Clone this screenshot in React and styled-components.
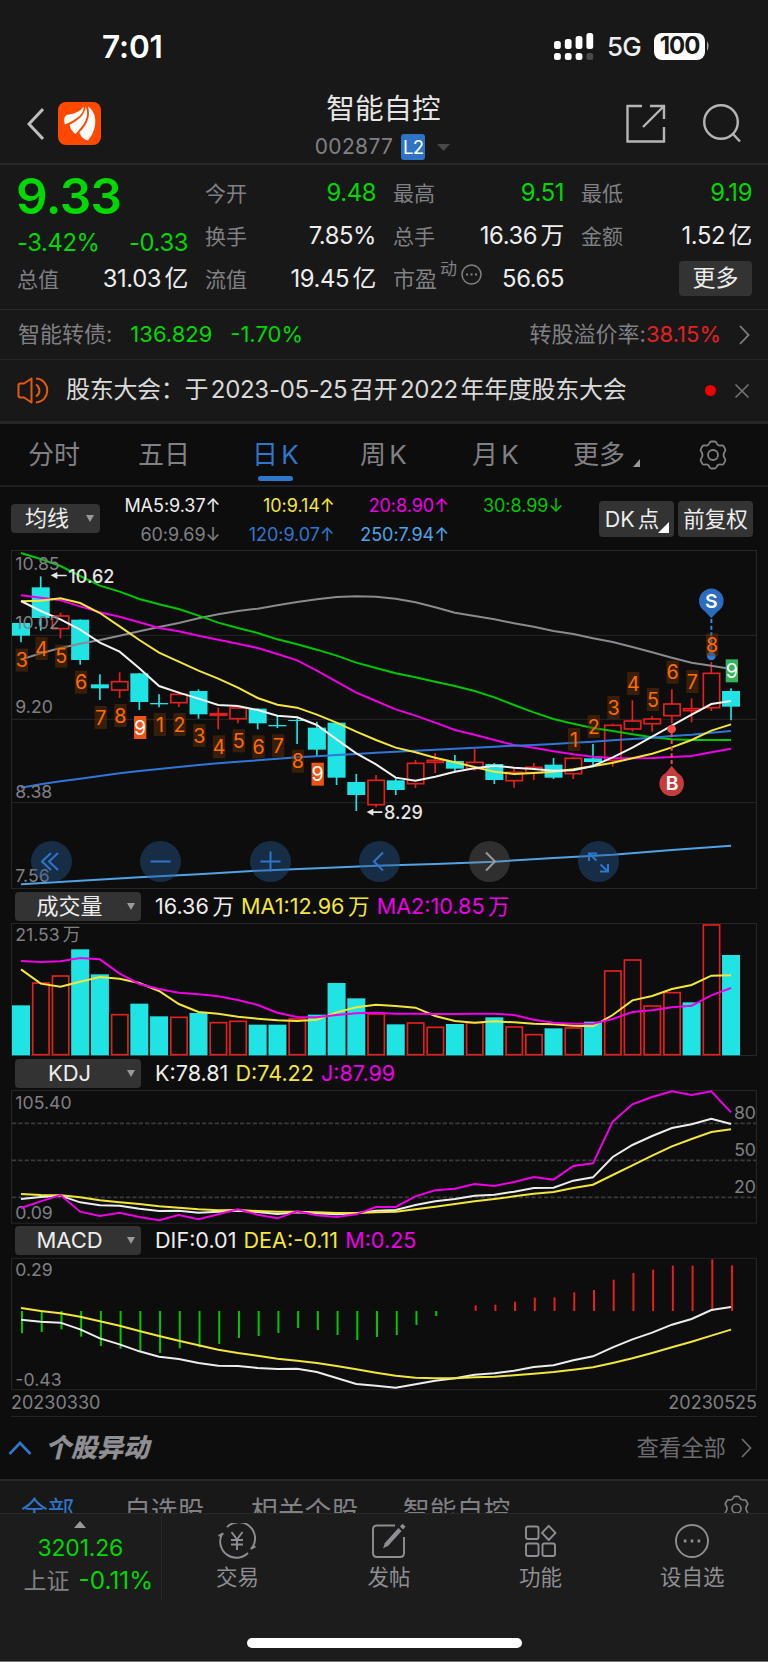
import styled, { createGlobalStyle, css } from "styled-components";

const GlobalStyle = createGlobalStyle`
  * {
    box-sizing: border-box;
  }

  body {
    margin: 0;
    background-color: #0d0d0d;
    font-family: Inter, "Noto Sans CJK SC", sans-serif;
    line-height: 1.2;
    color: #ededed;
  }
`;

const GREEN = "#00d800";
const CYAN = "#20e3e3";
const RED = "#e3201f";
const YELLOW = "#f2e63c";
const MAGENTA = "#ee00e6";
const BLUE = "#2f76cc";
const GRAY = "#808085";

const Screen = styled.div`
  width: 768px;
  height: 1662px;
  display: flex;
  flex-direction: column;
  overflow: hidden;
  white-space: nowrap;
  border-bottom: 1px solid #6e6e6e;
`;

const StatusBar = styled.div`
  height: 86px;
  padding: 6px 58px 0 102px;
  display: flex;
  align-items: center;
  background-color: #181818;
`;

const Clock = styled.div`
  font-weight: 600;
  font-size: 31.5px;
  letter-spacing: -0.1px;
  color: #fff;
  margin: 1px auto 0 0;
`;

const Network = styled.div`
  font-size: 26px;
  font-weight: 500;
  letter-spacing: -0.8px;
  width: 35px;
  margin: 2px 12px 0 13px;
`;

const Battery = styled.div`
  width: 51px;
  height: 27px;
  border-radius: 8px;
  background-color: #fff;
  color: #181818;
  font-weight: 700;
  font-size: 24px;
  letter-spacing: -1px;
  display: flex;
  align-items: center;
  justify-content: center;
`;

const NavBar = styled.div`
  height: 79px;
  padding: 0 27px;
  display: flex;
  background-color: #181818;
  border-bottom: 2px solid #272727;

  > svg {
    flex: none;
  }
`;

const LogoMark = styled.svg`
  width: 43px;
  height: 43px;
  margin: 16px 0 0 14px;
`;

const NavTitle = styled.div`
  flex: 1;
  display: flex;
  flex-direction: column;
  align-items: center;
  margin-left: 40px;
`;

const StockName = styled.div`
  font-size: 28.6px;
  line-height: 34px;
  margin-top: 6px;
  color: #e6e6e6;
`;

const StockCode = styled.div`
  display: flex;
  align-items: center;
  font-size: 21px;
  line-height: 26px;
  letter-spacing: 0.35px;
  margin: 8px 2px 0 0;
  color: ${GRAY};

  svg {
    margin-left: 12px;
  }
`;

const LevelBadge = styled.span`
  width: 24px;
  height: 26px;
  margin-left: 8px;
  border-radius: 3px;
  background-color: #2f73c6;
  color: #fff;
  font-size: 18.5px;
  letter-spacing: -0.5px;
  text-align: center;
`;

const Quote = styled.div`
  height: 145px;
  padding: 7px 16px 0 17px;
  display: grid;
  grid-template-columns: repeat(4, 171px);
  grid-auto-rows: 43px;
  column-gap: 17px;
  background-color: #181818;
  border-bottom: 1px solid #2a2a2a;
`;

const QuoteCell = styled.div`
  display: flex;
  justify-content: space-between;
  align-items: center;
  font-size: 23.8px;
  letter-spacing: -0.4px;
  word-spacing: -2.8px;
  padding-top: ${({ $drop }) => $drop || 0}px;
  color: ${({ $color }) => $color || "#ededed"};
`;

const Label = styled.span`
  font-size: 21px;
  letter-spacing: 0;
  color: ${GRAY};
`;

const Price = styled.div`
  font-weight: 600;
  font-size: 49.5px;
  line-height: 48px;
  letter-spacing: -0.6px;
  margin-left: -1px;
  color: ${GREEN};
`;

const PeLabel = styled(Label)`
  display: flex;
  align-items: center;
  font-size: 22px;

  sup {
    font-size: 17px;
    line-height: 20px;
    margin: -21px 4px 0 3px;
  }

  svg {
    margin-top: -9px;
  }
`;

const MoreButton = styled.div`
  width: 73px;
  height: 35px;
  margin: -2px 0 0 auto;
  border-radius: 4px;
  background-color: #333;
  font-size: 23px;
  line-height: 35px;
  text-align: center;
  letter-spacing: 0;
`;

const BondRow = styled.div`
  height: 50px;
  padding: 0 18px;
  display: flex;
  align-items: center;
  background-color: #181818;
  border-bottom: 1px solid #252525;
  font-size: 22px;
  color: ${GRAY};

  svg {
    margin-left: 18px;
  }
`;

const BondValue = styled.span`
  color: ${GREEN};
  margin-left: 18px;
`;

const PremiumLabel = styled.span`
  margin-left: auto;
`;

const Premium = styled.span`
  color: #e32121;
`;

const NoticeRow = styled.div`
  height: 64px;
  padding: 0 19px 0 17px;
  display: flex;
  align-items: center;
  background-color: #181818;
  border-bottom: 3px solid #262626;
`;

const NoticeText = styled.div`
  flex: 1;
  font-size: 24px;
  letter-spacing: -0.3px;
  word-spacing: -3.8px;
  margin-left: 17px;
  color: #dadada;
`;

const RedDot = styled.i`
  width: 11px;
  height: 11px;
  border-radius: 50%;
  background-color: #f00000;
  margin-right: 19px;
`;

const PeriodTabs = styled.div`
  height: 63px;
  padding-left: 28px;
  display: grid;
  grid-template-columns: 110px 114px 108px 112px 101px 125px 30px;
  align-items: center;
  border-bottom: 2px solid #1f1f1f;
`;

const PeriodTab = styled.div`
  position: relative;
  justify-self: start;
  font-size: 26px;
  line-height: 40px;
  word-spacing: -4px;
  color: ${GRAY};

  ${({ $active }) =>
    $active &&
    css`
      color: ${BLUE};

      &::after {
        content: "";
        position: absolute;
        left: 50%;
        bottom: -6px;
        width: 35px;
        height: 5px;
        margin-left: -17px;
        border-radius: 3px;
        background-color: ${BLUE};
      }
    `}

  svg {
    margin-left: 8px;
    vertical-align: -3px;
  }
`;

const MaBar = styled.div`
  height: 58px;
  padding: 0 15px 0 11px;
  display: flex;
  align-items: flex-start;
`;

const Select = styled.div`
  width: ${({ $width }) => $width}px;
  height: 29px;
  margin-top: ${({ $top }) => $top || 0}px;
  flex: none;
  border-radius: 4px;
  background-color: #333;
  display: flex;
  align-items: center;
  font-size: 22px;
  line-height: 29px;
  color: #ededed;

  span {
    flex: 1;
    text-align: center;
    padding-right: 3px;
  }

  svg {
    margin-right: 6px;
  }
`;

const MaGrid = styled.div`
  display: grid;
  grid-template-columns: 120.5px repeat(3, 114.3px);
  grid-auto-rows: 29px;
  margin: 4px 35.6px 0 0;
  text-align: right;
  font-size: 18px;
  line-height: 29px;
  letter-spacing: -0.05px;
`;

const Colored = styled.span`
  color: ${({ $color }) => $color};
`;

const ToolButton = styled.div`
  width: 75px;
  height: 36px;
  flex: none;
  margin: 14px 4px 0 0;
  padding-right: ${({ $menu }) => ($menu ? 9 : 0)}px;
  border-radius: 4px;
  background-color: #333;
  font-size: 21.5px;
  line-height: 36px;
  word-spacing: -3px;
  text-align: center;
  position: relative;

  svg {
    position: absolute;
    right: 5px;
    bottom: 4px;
  }
`;

const ChartBox = styled.div`
  position: relative;
  height: ${({ $height }) => $height}px;

  > svg {
    display: block;
  }
`;

const ChartControls = styled.div`
  position: absolute;
  left: 31px;
  top: 296px;
  display: flex;
  gap: 68.4px;
`;

const RoundButton = styled.div`
  width: 41px;
  height: 41px;
  border-radius: 50%;
  background-color: ${({ $muted }) =>
    $muted ? "rgba(120, 120, 120, 0.32)" : "rgba(38, 88, 148, 0.42)"};
  color: ${({ $muted }) => ($muted ? "#9a9a9a" : "#2f76cc")};
`;

const PanelHeader = styled.div`
  height: 33px;
  padding-left: 15px;
  display: flex;
  align-items: center;
`;

const PanelValues = styled.div`
  display: flex;
  gap: 7px;
  margin: 1px 0 0 14px;
  font-size: 21.6px;
  word-spacing: -2.5px;
`;

const Dates = styled.div`
  height: 22px;
  padding: 0 11px;
  display: flex;
  justify-content: space-between;
  font-size: 18px;
  line-height: 23px;
  color: ${GRAY};
`;

const MovesHeader = styled.div`
  height: 63px;
  margin: 3px 11px 0;
  border-top: 1px solid #242424;
  display: flex;
  align-items: center;
  font-size: 22.4px;
  color: #6c6c70;

  > svg:first-child {
    margin-left: -3px;
  }

  > svg:last-child {
    margin: 0 5px 0 15px;
  }
`;

const MovesTitle = styled.div`
  flex: 1;
  margin-left: 13px;
  font-size: 26px;
  font-weight: 900;
  font-style: italic;
  color: #8e8e93;
`;

const MovesTabs = styled.div`
  height: 34px;
  padding: 14px 18px 0 21px;
  display: grid;
  grid-template-columns: 103px 127px 152px 1fr 27px;
  overflow: hidden;
  background-color: #181818;
  border-top: 2px solid #272727;
  font-size: 26.8px;
  line-height: 32px;
  color: ${GRAY};
`;

const MovesTab = styled.div`
  color: ${({ $active }) => ($active ? BLUE : GRAY)};
`;

const BottomBar = styled.div`
  flex: 1;
  position: relative;
  display: flex;
  background-color: #1c1c1c;
  border-top: 1px solid #2a2a2a;
`;

const IndexBox = styled.div`
  width: 162px;
  height: 87px;
  padding-top: 7px;
  border-right: 1px solid #262626;
  display: flex;
  flex-direction: column;
  align-items: center;
  font-size: 23px;
  line-height: 32px;
  letter-spacing: -0.2px;
  color: ${GREEN};

  svg {
    display: block;
    margin-bottom: 4px;
  }
`;

const IndexChange = styled.div`
  margin-left: 16px;
  line-height: 32px;
  font-size: 24.3px;
  letter-spacing: 0;

  span {
    color: ${GRAY};
    font-size: 23px;
    margin-right: 9px;
  }
`;

const Actions = styled.div`
  flex: 1;
  display: grid;
  grid-template-columns: repeat(4, 151.6px);
`;

const Action = styled.div`
  display: flex;
  flex-direction: column;
  align-items: center;
  padding-top: 9px;
  font-size: 21.5px;
  line-height: 32px;
  color: #8e8e93;

  svg {
    margin-bottom: 2px;
  }
`;

const HomeIndicator = styled.div`
  position: absolute;
  left: 247px;
  bottom: 13px;
  width: 275px;
  height: 10px;
  border-radius: 5px;
  background-color: #fff;
`;

// chart data, three units per pixel, one value per trading day
const STEP = 59.17;
const dayX = (i) => 63 + i * STEP;

// [isUp, high, top, bottom, low]
const candles = [
  [0, 233, 234, 272, 292],
  [0, 94, 127, 219, 257],
  [1, 203, 211, 253, 280],
  [0, 223, 224, 345, 359],
  [0, 388, 418, 430, 465],
  [1, 382, 408, 437, 459],
  [0, 384, 385, 471, 495],
  [0, 448, 474, 478, 487],
  [1, 438, 446, 475, 486],
  [0, 433, 438, 508, 521],
  [1, 488, 504, 513, 553],
  [1, 483, 487, 523, 535],
  [0, 490, 491, 535, 553],
  [0, 510, 540, 544, 549],
  [0, 521, 525, 528, 597],
  [0, 530, 548, 614, 633],
  [0, 532, 533, 698, 720],
  [0, 687, 711, 750, 798],
  [1, 690, 704, 781, 787],
  [0, 700, 706, 735, 750],
  [1, 645, 653, 718, 729],
  [1, 624, 644, 654, 684],
  [0, 630, 648, 671, 683],
  [1, 612, 650, 673, 677],
  [0, 654, 657, 705, 717],
  [1, 670, 680, 709, 728],
  [1, 654, 665, 685, 705],
  [0, 639, 659, 698, 702],
  [1, 636, 638, 688, 702],
  [0, 597, 640, 651, 667],
  [1, 536, 539, 648, 665],
  [1, 466, 526, 554, 560],
  [1, 514, 520, 538, 560],
  [1, 433, 475, 514, 535],
  [1, 460, 489, 499, 532],
  [1, 351, 383, 490, 498],
  [0, 430, 438, 485, 526],
];

const averages = [
  { color: "#8a8a8f", values: [344, 325, 309, 296, 285, 272, 259, 246, 234, 220, 208, 198, 191, 181, 171, 163, 156, 154, 155, 161, 172, 187, 203, 213, 223, 235, 245, 258, 267, 280, 291, 306, 322, 338, 353, 362, 372] },
  { color: "#00c800", values: [24, 42, 63, 93, 122, 140, 162, 178, 192, 212, 233, 249, 264, 283, 298, 314, 332, 353, 369, 385, 397, 410, 423, 438, 457, 480, 502, 522, 536, 549, 558, 568, 577, 583, 585, 585, 585] },
  { color: MAGENTA, values: [151, 158, 166, 184, 202, 215, 232, 249, 259, 272, 284, 296, 309, 327, 346, 377, 410, 443, 468, 493, 512, 533, 555, 569, 585, 600, 608, 619, 628, 635, 639, 640, 639, 636, 633, 622, 611] },
  { color: "#2f76d8", values: [728, 718, 709, 701, 693, 685, 678, 672, 666, 660, 655, 650, 646, 641, 637, 634, 630, 627, 623, 620, 617, 614, 611, 608, 605, 602, 600, 597, 593, 590, 586, 582, 578, 573, 569, 563, 558] },
  { color: "#4fa3e6", step: 3, values: [1018, 1007, 997, 988, 977, 970, 962, 957, 950, 939, 929, 915, 902] },
  { color: YELLOW, values: [169, 167, 160, 174, 204, 244, 285, 323, 350, 377, 401, 428, 459, 479, 488, 509, 533, 560, 585, 608, 622, 638, 652, 666, 680, 687, 684, 680, 673, 664, 653, 640, 626, 607, 585, 557, 538] },
  { color: "#f2f2f2", values: [168, 198, 223, 254, 293, 320, 370, 423, 443, 461, 480, 483, 495, 512, 517, 540, 583, 625, 658, 698, 707, 695, 680, 670, 662, 668, 672, 677, 676, 663, 637, 608, 575, 542, 509, 477, 468] },
];

// [day, digit, y, highlight]
const counts = [
  [0, 3, 345],
  [1, 4, 310],
  [2, 5, 333],
  [3, 6, 411],
  [4, 7, 517],
  [5, 8, 511],
  [6, 9, 547, "#ea5514"],
  [7, 1, 538],
  [8, 2, 538],
  [9, 3, 571],
  [10, 4, 605],
  [11, 5, 587],
  [12, 6, 605],
  [13, 7, 602],
  [14, 8, 648],
  [15, 9, 687, "#ea5514"],
  [28, 1, 583],
  [29, 2, 544],
  [30, 3, 487],
  [31, 4, 415],
  [32, 5, 463],
  [33, 6, 381],
  [34, 7, 409],
  [35, 8, 299],
  [36, 9, 377, "#36b25f"],
];

const volumes = [361, 292, 271, 193, 268, 387, 356, 394, 395, 384, 411, 407, 419, 419, 400, 389, 294, 340, 385, 418, 412, 425, 417, 411, 397, 424, 447, 430, 427, 410, 256, 223, 361, 321, 352, 118, 210];
const upDays = [1, 2, 5, 8, 10, 11, 14, 18, 20, 21, 23, 25, 26, 28, 30, 31, 32, 33, 35];
const volumeMa1 = [253, 296, 305, 290, 276, 281, 294, 318, 357, 381, 386, 395, 401, 406, 408, 404, 382, 367, 359, 363, 368, 393, 408, 413, 409, 412, 416, 418, 422, 424, 390, 346, 333, 312, 300, 272, 271];
const volumeMa2 = [228, 231, 229, 219, 223, 266, 297, 312, 323, 328, 334, 345, 360, 383, 396, 397, 390, 385, 383, 386, 386, 387, 387, 386, 386, 390, 404, 413, 416, 416, 402, 381, 376, 367, 362, 331, 309];

const kLine = [417, 411, 407, 427, 436, 437, 446, 453, 452, 458, 455, 452, 456, 462, 457, 460, 463, 460, 452, 450, 435, 424, 417, 407, 404, 395, 384, 383, 362, 352, 291, 255, 228, 204, 193, 176, 192];
const dLine = [402, 405, 406, 412, 421, 427, 432, 439, 443, 448, 451, 450, 453, 455, 455, 457, 459, 459, 457, 455, 448, 440, 432, 424, 417, 409, 401, 396, 384, 374, 345, 316, 287, 259, 237, 216, 208];
const jLine = [444, 424, 405, 455, 468, 458, 471, 481, 465, 478, 463, 448, 464, 475, 454, 466, 471, 463, 441, 441, 409, 391, 386, 372, 378, 366, 351, 359, 318, 310, 185, 133, 111, 94, 105, 94, 157];

const macdBars = [325, 321, 313, 335, 363, 371, 378, 384, 370, 367, 357, 339, 333, 324, 309, 315, 330, 345, 336, 330, 300, 273, 258, 241, 239, 230, 218, 217, 202, 195, 164, 144, 134, 122, 122, 103, 121];
const difLine = [284, 290, 293, 313, 340, 358, 379, 395, 402, 414, 422, 423, 429, 432, 431, 441, 459, 477, 482, 488, 478, 467, 460, 449, 445, 437, 426, 421, 406, 394, 367, 343, 323, 299, 282, 255, 246];
const deaLine = [249, 258, 265, 275, 289, 302, 318, 333, 347, 361, 374, 384, 392, 401, 407, 414, 423, 433, 443, 452, 458, 460, 460, 457, 455, 451, 446, 441, 434, 427, 414, 400, 384, 367, 350, 332, 314];

function Line({ values, color, step = 1 }) {
  const points = values.map((y, i) => `${dayX(i * step)},${y}`).join(" ");
  return <polyline points={points} fill="none" stroke={color} strokeWidth="6" />;
}

function Frame({ top, height }) {
  return <rect x="34.5" y={top} width="2235" height={height} fill="none" stroke="#262626" strokeWidth="3" />;
}

function AxisText({ x = 46, y, anchor, children }) {
  return (
    <text x={x} y={y} fontSize="53" fill={GRAY} textAnchor={anchor}>
      {children}
    </text>
  );
}

function Bar({ x, top, bottom, up, width = 54 }) {
  if (!up) return <rect x={x - width / 2} y={top} width={width} height={bottom - top} fill={CYAN} />;
  return (
    <rect
      x={x - width / 2 + 3}
      y={top + 2}
      width={width - 5}
      height={Math.max(bottom - top - 4, 2)}
      fill="#0d0d0d"
      stroke={RED}
      strokeWidth="5"
    />
  );
}

function PriceChart() {
  return (
    <svg width="768" height="345" viewBox="0 0 2304 1035">
      <Frame top={16.5} height={1014} />
      {[271, 523, 773].map((y) => (
        <line key={y} x1="36" x2="2268" y1={y} y2={y} stroke="#222" strokeWidth="4" />
      ))}
      {candles.map(([up, high, top, bottom, low], i) => (
        <g key={i}>
          <line x1={dayX(i)} x2={dayX(i)} y1={high} y2={low} stroke={up ? RED : CYAN} strokeWidth="5" />
          <Bar x={dayX(i)} top={top} bottom={bottom} up={up} />
        </g>
      ))}
      {averages.map((line) => (
        <Line key={line.color} {...line} />
      ))}
      <AxisText y={75}>10.85</AxisText>
      <AxisText y={252}>10.02</AxisText>
      <AxisText y={505}>9.20</AxisText>
      <AxisText y={758}>8.38</AxisText>
      <AxisText y={1010}>7.56</AxisText>
      <g fill="#e6e6e6" fontSize="54" fontWeight="500">
        <path d="M152 91l20-10v8h28v5h-28v8z" />
        <text x="205" y="113">10.62</text>
        <path d="M1100 801l20-10v8h27v5h-27v8z" />
        <text x="1152" y="822">8.29</text>
      </g>
      <path d="M2134 222V320" stroke="#3a86e0" strokeWidth="6" strokeDasharray="12 8" />
      <circle cx="2134" cy="333" r="13" fill="#2f7de0" />
      {counts.map(([day, digit, y, fill]) => (
        <g key={day}>
          <rect x={dayX(day) - 16} y={y - 34} width="37" height="69" fill={fill || "rgba(110, 50, 0, 0.45)"} />
          <text x={dayX(day) + 2.5} y={y + 22} fontSize="59" textAnchor="middle" fill={fill ? "#fff" : "#ff6c00"}>
            {digit}
          </text>
        </g>
      ))}
      <path d="M2134 220l-18-20a37 37 0 1 1 36 0z" fill="#2c6cc0" />
      <text x="2134" y="188" fontSize="58" fontWeight="600" textAnchor="middle" fill="#fff">S</text>
      <path d="M2015 565V660" stroke="#f04a4a" strokeWidth="6" strokeDasharray="12 8" />
      <circle cx="2015" cy="552" r="13" fill="#f04a4a" />
      <path d="M2015 662l-18 22a37 37 0 1 0 36 0z" fill="#c53c3c" />
      <text x="2016" y="736" fontSize="58" fontWeight="600" textAnchor="middle" fill="#fff">B</text>
    </svg>
  );
}

function VolumeChart() {
  return (
    <svg width="768" height="134" viewBox="0 114 2304 402">
      <Frame top={115.5} height={396} />
      {volumes.map((top, i) => (
        <Bar key={i} x={dayX(i)} top={top} bottom={511} up={upDays.includes(i)} />
      ))}
      <Line values={volumeMa1} color={YELLOW} />
      <Line values={volumeMa2} color={MAGENTA} />
      <AxisText y={169}>
        21.53<tspan dx="9">万</tspan>
      </AxisText>
    </svg>
  );
}

function KdjChart() {
  return (
    <svg width="768" height="134" viewBox="0 90 2304 402">
      <Frame top={91.5} height={398} />
      {[190, 301, 412].map((y, i) => (
        <g key={y}>
          <line x1="36" x2="2268" y1={y} y2={y} stroke="#3a3a3a" strokeWidth="5" strokeDasharray="13 6" />
          <AxisText x={2268} y={y - 12} anchor="end">{80 - i * 30}</AxisText>
        </g>
      ))}
      <AxisText y={146}>105.40</AxisText>
      <AxisText y={476}>0.09</AxisText>
      <Line values={kLine} color="#ededed" />
      <Line values={dLine} color={YELLOW} />
      <Line values={jLine} color={MAGENTA} />
    </svg>
  );
}

function MacdChart() {
  return (
    <svg width="768" height="134" viewBox="0 96 2304 402">
      <Frame top={100} height={394} />
      {macdBars.map((y, i) => (
        <line key={i} x1={dayX(i) + 3} x2={dayX(i) + 3} y1="258" y2={y} stroke={y > 258 ? "#00c800" : RED} strokeWidth="6" />
      ))}
      <Line values={difLine} color="#ededed" />
      <Line values={deaLine} color={YELLOW} />
      <AxisText y={154}>0.29</AxisText>
      <AxisText y={484}>-0.43</AxisText>
    </svg>
  );
}

function Triangle({ width = 8, height = 7, color = "#99999e", up }) {
  return (
    <svg width={width} height={height} viewBox="0 0 10 10" preserveAspectRatio="none">
      <path d={up ? "M0 10h10L5 0z" : "M0 0h10L5 10z"} fill={color} />
    </svg>
  );
}

function CornerMark({ width, height, color }) {
  return (
    <svg width={width} height={height} viewBox="0 0 10 10" preserveAspectRatio="none">
      <path d="M10 0v10H0z" fill={color} />
    </svg>
  );
}

function ChevronRight({ color = "#808085" }) {
  return (
    <svg width="11" height="20" viewBox="0 0 11 20" fill="none" stroke={color} strokeWidth="1.8">
      <path d="M1 1l8.5 9L1 19" />
    </svg>
  );
}

function Gear({ size, color = GRAY }) {
  return (
    <svg width={size} height={size} viewBox="0 0 30 30" fill="none" stroke={color} strokeWidth="1.8">
      <path
        d="M11.5 3Q12 1.5 13.5 1.5h3Q18 1.5 18.5 3c.8 2 2.5 2.9 4.7 2.4Q24.8 5 25.6 6.3l1.5 2.6Q27.9 10.2 26.8 11.4c-1.5 2.1-1.5 5.1 0 7.2Q27.9 19.8 27.1 21.1l-1.5 2.6Q24.8 25 23.2 24.6c-2.2-.5-3.9.4-4.7 2.4Q18 28.5 16.5 28.5h-3Q12 28.5 11.5 27c-.8-2-2.5-2.9-4.7-2.4Q5.2 25 4.4 23.7L2.9 21.1Q2.1 19.8 3.2 18.6c1.5-2.1 1.5-5.1 0-7.2Q2.1 10.2 2.9 8.9L4.4 6.3Q5.2 5 6.8 5.4c2.2.5 3.9-.4 4.7-2.4z"
        strokeLinejoin="round"
      />
      <circle cx="15" cy="15" r="5" />
    </svg>
  );
}

function Signal() {
  const tops = [8, 6, 3, 0];
  return (
    <svg width="40" height="27" viewBox="0 0 40 27" fill="#fff">
      {tops.map((top, i) => (
        <g key={top}>
          <rect x={i * 10.8} y={top} width="6.8" height={16 - top} rx="2.5" />
          <rect x={i * 10.8} y="20" width="6.8" height="7" rx="2.5" fill={i === 3 ? "#4a4a4a" : "#fff"} />
        </g>
      ))}
    </svg>
  );
}

function Logo() {
  return (
    <LogoMark viewBox="0 0 43 43">
      <rect width="43" height="43" rx="8" fill="#ff4800" />
      <g fill="#fff">
        <path d="M7 22.5C5.5 18.5 6 14.5 9 12.8C15 12 22 10.5 25.5 4.5C26.5 12 19 17 7 22.5z" />
        <path d="M17.5 32C13 28.5 11.5 24.5 12 22.5C20 18.5 27 13 27.8 4.5C32 15 26 22.5 17.5 32z" />
        <path d="M30 38.5C26 37.5 22.5 34.5 21.5 30.5C29 22.5 33 14.5 30 4.5C39 10 40.5 26 30 38.5z" />
      </g>
    </LogoMark>
  );
}

const controlPaths = [
  "M20 12L11 20.5L20 29M27 12L18 20.5L27 29",
  "M10.5 20.5H30.5",
  "M10.5 20.5H30.5M20.5 10.5V30.5",
  "M24 11.5L15 20.5L24 29.5",
  "M17 11.5L26 20.5L17 29.5",
  "M11 20V12.5H19M11.5 13L18.5 19.5M30 23V30.5H22M29.5 30L22.5 23.5",
];

const actions = [
  {
    label: "交易",
    icon: (
      <>
        <path d="M9 4.2A16.3 16.3 0 0 1 34 25M30 30A16.3 16.3 0 0 1 4 11" />
        <path d="M.5 12.8L5.5 10.3M32.5 25.8L37.5 23.3" />
        <path d="M13.5 9L19 16.5L24.5 9M19 16.5V27M13 17H25M13 21.5H25" />
      </>
    ),
  },
  {
    label: "发帖",
    icon: (
      <>
        <path d="M25 2.5H7Q3 2.5 3 6.5V30Q3 34 7 34H30Q34 34 34 30V14" />
        <path d="M16 22L30 6.5" strokeWidth="4.2" />
        <path d="M31.5 5L34 2.2" strokeWidth="4.2" />
        <path d="M13 25.5L18.2 22.5L15 19.8z" fill="currentColor" stroke="none" />
      </>
    ),
  },
  {
    label: "功能",
    icon: (
      <>
        <rect x="4" y="3.5" width="12.5" height="12.5" rx="2" />
        <rect x="4" y="20.5" width="12.5" height="12.5" rx="2" />
        <rect x="20.5" y="20.5" width="12.5" height="12.5" rx="2" />
        <path d="M26.7 2.8L33.5 9.9L26.7 17L20 9.9z" strokeLinejoin="round" />
      </>
    ),
  },
  {
    label: "设自选",
    icon: (
      <>
        <circle cx="19" cy="18" r="16" />
        <path d="M10.8 18h2.6M17.7 18h2.6M24.6 18h2.6" strokeWidth="2.8" />
      </>
    ),
  },
];

function Header() {
  return (
    <>
      <StatusBar>
        <Clock>7:01</Clock>
        <Signal />
        <Network>5G</Network>
        <Battery>100</Battery>
        <svg width="5" height="10" viewBox="0 0 5 10">
          <path d="M2 0q3 5 0 10z" fill="#b0b0b0" />
        </svg>
      </StatusBar>
      <NavBar>
        <svg width="17" height="77" viewBox="0 0 17 77" fill="none" stroke="#bdbdbd" strokeWidth="3">
          <path d="M16 23L2 38L16 53" />
        </svg>
        <Logo />
        <NavTitle>
          <StockName>智能自控</StockName>
          <StockCode>
            002877
            <LevelBadge>L2</LevelBadge>
            <Triangle width={13} height={7} color="#48484a" />
          </StockCode>
        </NavTitle>
        <svg width="115" height="77" viewBox="0 0 115 77" fill="none" stroke="#b5b5b5" strokeWidth="2.4">
          <path d="M16 20H1.5V55.5H38V41M24 20H38V33M37.5 20.5L17 41" />
          <circle cx="95" cy="36" r="16.8" />
          <path d="M106.5 47.5L114 55.5" />
        </svg>
      </NavBar>
    </>
  );
}

function QuotePanel() {
  return (
    <Quote>
      <Price>9.33</Price>
      <QuoteCell $color={GREEN}><Label>今开</Label>9.48</QuoteCell>
      <QuoteCell $color={GREEN}><Label>最高</Label>9.51</QuoteCell>
      <QuoteCell $color={GREEN}><Label>最低</Label>9.19</QuoteCell>
      <QuoteCell $color={GREEN} $drop={13}>
        <span>-3.42%</span>
        <span>-0.33</span>
      </QuoteCell>
      <QuoteCell><Label>换手</Label>7.85%</QuoteCell>
      <QuoteCell><Label>总手</Label>16.36 万</QuoteCell>
      <QuoteCell><Label>金额</Label>1.52 亿</QuoteCell>
      <QuoteCell><Label>总值</Label>31.03 亿</QuoteCell>
      <QuoteCell><Label>流值</Label>19.45 亿</QuoteCell>
      <QuoteCell>
        <PeLabel>
          市盈<sup>动</sup>
          <svg width="21" height="21" viewBox="0 0 21 21" fill="none" stroke={GRAY} strokeWidth="1.5">
            <circle cx="10.5" cy="10.5" r="9.5" />
            <path d="M5 10.5h2M9.5 10.5h2M14 10.5h2" strokeWidth="2" />
          </svg>
        </PeLabel>
        56.65
      </QuoteCell>
      <QuoteCell><MoreButton>更多</MoreButton></QuoteCell>
    </Quote>
  );
}

function Panel({ name, values, children }) {
  return (
    <>
      <PanelHeader>
        <Select $width={126}>
          <span>{name}</span>
          <Triangle />
        </Select>
        <PanelValues>
          {values.map(([text, color]) => (
            <Colored key={text} $color={color}>{text}</Colored>
          ))}
        </PanelValues>
      </PanelHeader>
      <ChartBox $height={134}>{children}</ChartBox>
    </>
  );
}

export default function App() {
  return (
    <Screen>
      <GlobalStyle />
      <Header />
      <QuotePanel />
      <BondRow>
        智能转债:
        <BondValue>136.829</BondValue>
        <BondValue>-1.70%</BondValue>
        <PremiumLabel>转股溢价率:</PremiumLabel>
        <Premium>38.15%</Premium>
        <ChevronRight />
      </BondRow>
      <NoticeRow>
        <svg width="32" height="27" viewBox="0 0 32 27" fill="none" stroke="#e55a0c" strokeWidth="2" strokeLinejoin="round">
          <path d="M14.5 1.5L7 6.5H3.5Q1.5 6.5 1.5 8.5V18.5Q1.5 20.5 3.5 20.5H7L14.5 25.5z" />
          <path d="M19 7.5A7 7 0 0 1 19 19.5M19 1.5C34 2.5 34 24.5 19 25.5" />
        </svg>
        <NoticeText>股东大会：于 2023-05-25 召开 2022 年年度股东大会</NoticeText>
        <RedDot />
        <svg width="14" height="14" viewBox="0 0 14 14" stroke="#77777b" strokeWidth="1.5">
          <path d="M.5.5l13 13M13.5.5l-13 13" />
        </svg>
      </NoticeRow>

      <PeriodTabs>
        <PeriodTab>分时</PeriodTab>
        <PeriodTab>五日</PeriodTab>
        <PeriodTab $active>日 K</PeriodTab>
        <PeriodTab>周 K</PeriodTab>
        <PeriodTab>月 K</PeriodTab>
        <PeriodTab>
          更多
          <CornerMark width={7} height={8} color="#99999e" />
        </PeriodTab>
        <Gear size={30} />
      </PeriodTabs>

      <MaBar>
        <Select $width={89} $top={17}>
          <span>均线</span>
          <Triangle />
        </Select>
        <MaGrid>
          <Colored $color="#ededed">MA5:9.37↑</Colored>
          <Colored $color={YELLOW}>10:9.14↑</Colored>
          <Colored $color={MAGENTA}>20:8.90↑</Colored>
          <Colored $color="#00c800">30:8.99↓</Colored>
          <Colored $color={GRAY}>60:9.69↓</Colored>
          <Colored $color={BLUE}>120:9.07↑</Colored>
          <Colored $color="#4fa3e6">250:7.94↑</Colored>
        </MaGrid>
        <ToolButton $menu>
          DK 点
          <CornerMark width={11} height={11} color="#fff" />
        </ToolButton>
        <ToolButton>前复权</ToolButton>
      </MaBar>
      <ChartBox $height={345}>
        <PriceChart />
        <ChartControls>
          {controlPaths.map((d, i) => (
            <RoundButton key={d} $muted={i === 4}>
              <svg width="41" height="41" viewBox="0 0 41 41" fill="none" stroke="currentColor" strokeWidth="2">
                <path d={d} />
              </svg>
            </RoundButton>
          ))}
        </ChartControls>
      </ChartBox>

      <Panel name="成交量" values={[["16.36 万", "#ededed"], ["MA1:12.96 万", YELLOW], ["MA2:10.85 万", MAGENTA]]}>
        <VolumeChart />
      </Panel>
      <Panel name="KDJ" values={[["K:78.81", "#ededed"], ["D:74.22", YELLOW], ["J:87.99", MAGENTA]]}>
        <KdjChart />
      </Panel>
      <Panel name="MACD" values={[["DIF:0.01", "#ededed"], ["DEA:-0.11", YELLOW], ["M:0.25", MAGENTA]]}>
        <MacdChart />
      </Panel>
      <Dates>
        <span>20230330</span>
        <span>20230525</span>
      </Dates>

      <MovesHeader>
        <svg width="24" height="14" viewBox="0 0 24 14" fill="none" stroke={BLUE} strokeWidth="2.6">
          <path d="M1.5 13L12 2L22.5 13" />
        </svg>
        <MovesTitle>个股异动</MovesTitle>
        查看全部
        <ChevronRight color="#6c6c70" />
      </MovesHeader>
      <MovesTabs>
        <MovesTab $active>全部</MovesTab>
        <MovesTab>自选股</MovesTab>
        <MovesTab>相关个股</MovesTab>
        <MovesTab>智能自控</MovesTab>
        <Gear size={27} />
      </MovesTabs>

      <BottomBar>
        <IndexBox>
          <Triangle up width={12} height={7} />
          3201.26
          <IndexChange><span>上证</span>-0.11%</IndexChange>
        </IndexBox>
        <Actions>
          {actions.map(({ label, icon }) => (
            <Action key={label}>
              <svg width="38" height="36" viewBox="0 0 38 36" fill="none" stroke="currentColor" strokeWidth="1.9">
                {icon}
              </svg>
              {label}
            </Action>
          ))}
        </Actions>
        <HomeIndicator />
      </BottomBar>
    </Screen>
  );
}
